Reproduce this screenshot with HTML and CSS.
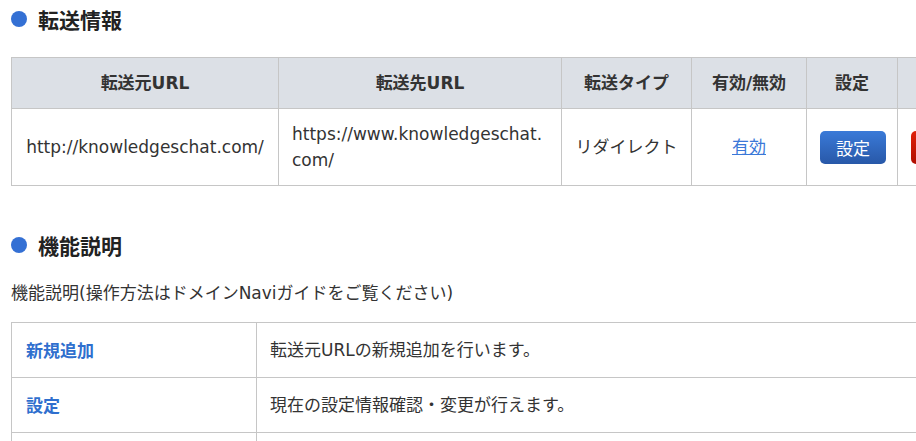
FILE: index.html
```html
<!DOCTYPE html>
<html lang="ja">
<head>
<meta charset="utf-8">
<title>転送情報</title>
<link rel="stylesheet" href="styles.css">
</head>
<body>
<div class="page">
  <h2 class="sec-title"><span class="dot"></span>転送情報</h2>
  <table class="fwd">
    <colgroup>
      <col class="c1"><col class="c2"><col class="c3"><col class="c4"><col class="c5"><col class="c6">
    </colgroup>
    <thead>
      <tr>
        <th>転送元URL</th>
        <th>転送先URL</th>
        <th>転送タイプ</th>
        <th>有効/無効</th>
        <th>設定</th>
        <th>削除</th>
      </tr>
    </thead>
    <tbody>
      <tr>
        <td class="center">http://knowledgeschat.com/</td>
        <td class="wrap">https://www.knowledgeschat.<wbr>com/</td>
        <td class="center">リダイレクト</td>
        <td class="center"><a href="#" class="link">有効</a></td>
        <td class="center"><button class="btn btn-blue">設定</button></td>
        <td class="center"><button class="btn btn-red">削除</button></td>
      </tr>
    </tbody>
  </table>

  <h2 class="sec-title sec-2"><span class="dot"></span>機能説明</h2>
  <p class="lead">機能説明(操作方法はドメインNaviガイドをご覧ください)</p>
  <table class="desc">
    <colgroup><col class="d1"><col class="d2"></colgroup>
    <tbody>
      <tr><th>新規追加</th><td>転送元URLの新規追加を行います。</td></tr>
      <tr><th>設定</th><td>現在の設定情報確認・変更が行えます。</td></tr>
      <tr><th>削除</th><td>転送設定の削除を行います。</td></tr>
    </tbody>
  </table>
</div>
</body>
</html>
```

FILE: styles.css
```css
html, body {
  margin: 0;
  padding: 0;
  background: #fff;
  overflow: hidden;
}
body {
  font-family: "DejaVu Sans", "Noto Sans CJK JP", sans-serif;
  color: #333;
  font-size: 17px;
}
.page {
  padding: 0 0 0 11px;
  width: 1100px;
}
.sec-title {
  margin: 0;
  display: flex;
  align-items: center;
  gap: 11px;
  height: 38px;
  font-size: 21px;
  font-weight: bold;
  color: #222;
  font-family: "Noto Sans CJK JP", sans-serif;
}
.dot {
  width: 16px;
  height: 16px;
  border-radius: 50%;
  background: #3470d4;
  flex: none;
}
.sec-2 {
  margin-top: 40px;
}
table {
  border-collapse: collapse;
  table-layout: fixed;
}
.fwd {
  margin-top: 19px;
  width: 978px;
}
.c1 { width: 267px; }
.c2 { width: 283px; }
.c3 { width: 130px; }
.c4 { width: 115px; }
.c5 { width: 91px; }
.c6 { width: 91px; }
.fwd th, .fwd td {
  border: 1px solid #c6c6c6;
  padding: 12px 13px;
  line-height: 26px;
  vertical-align: middle;
}
.fwd th {
  background: #dce0e6;
  font-weight: bold;
  color: #333;
  text-align: center;
}
.fwd td.center { text-align: center; }
.fwd td.wrap {
  text-align: left;
  word-break: break-all;
}
.link {
  color: #3a78d8;
  text-decoration: underline;
}
.btn {
  font-family: "Noto Sans CJK JP", sans-serif;
  font-size: 17px;
  color: #fff;
  width: 66px;
  height: 33px;
  border: none;
  border-radius: 5px;
  padding: 0;
  line-height: 33px;
  vertical-align: middle;
}
.btn-blue {
  background: linear-gradient(#3a7ad8, #2858a8);
}
.btn-red {
  background: linear-gradient(#e0200a, #b00e00);
}
.lead {
  margin: 16px 0 16px;
  line-height: 26px;
}
.desc {
  width: 1000px;
}
.d1 { width: 245px; }
.d2 { width: 755px; }
.desc th, .desc td {
  border: 1px solid #c6c6c6;
  padding: 14px 13px;
  line-height: 26px;
  text-align: left;
}
.desc th {
  color: #2f6fce;
  font-weight: bold;
  font-family: "Noto Sans CJK JP", sans-serif;
  padding-left: 14px;
}
```
